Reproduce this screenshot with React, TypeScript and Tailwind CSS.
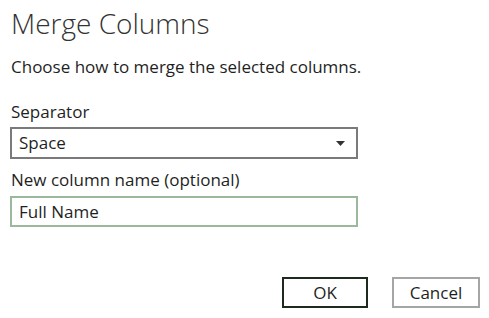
const App = () => {
  return (
    <div className="w-[489px] h-[318px] bg-white text-[#1f1f1f] font-['Open_Sans',sans-serif] flex flex-col px-[10px]">
      <h1 className="mt-[4px] pl-[1px] text-[28px] leading-[38px] font-light text-[#333]">
        Merge Columns
      </h1>
      <p className="mt-[13px] pl-[1px] text-[17px] leading-[24px]">
        Choose how to merge the selected columns.
      </p>

      <label className="mt-[22px] pl-[1px] text-[17px] leading-[22px]">Separator</label>
      <div className="mt-[4px] w-[348px] h-[32px] border-2 border-[#7a7a7a] flex items-center justify-between pl-[7px] pr-[11px]">
        <span className="text-[17px]">Space</span>
        <svg width="9" height="5" viewBox="0 0 9 5">
          <path d="M0 0 L9 0 L4.5 5 Z" fill="#333" />
        </svg>
      </div>

      <label className="mt-[10px] pl-[1px] text-[17px] leading-[22px]">
        New column name (optional)
      </label>
      <div className="mt-[5px] w-[348px] h-[31px] border-2 border-[#9cb89c] flex items-center pl-[7px]">
        <span className="text-[17px]">Full Name</span>
      </div>

      <div className="mt-auto mb-[10px] -mr-[1px] flex justify-end gap-[24px]">
        <button className="w-[86px] h-[31px] border-2 border-[#1f2a1f] text-[17px]">OK</button>
        <button className="w-[88px] h-[31px] border-2 border-[#a5a5a5] text-[17px]">Cancel</button>
      </div>
    </div>
  );
};

export default App;
